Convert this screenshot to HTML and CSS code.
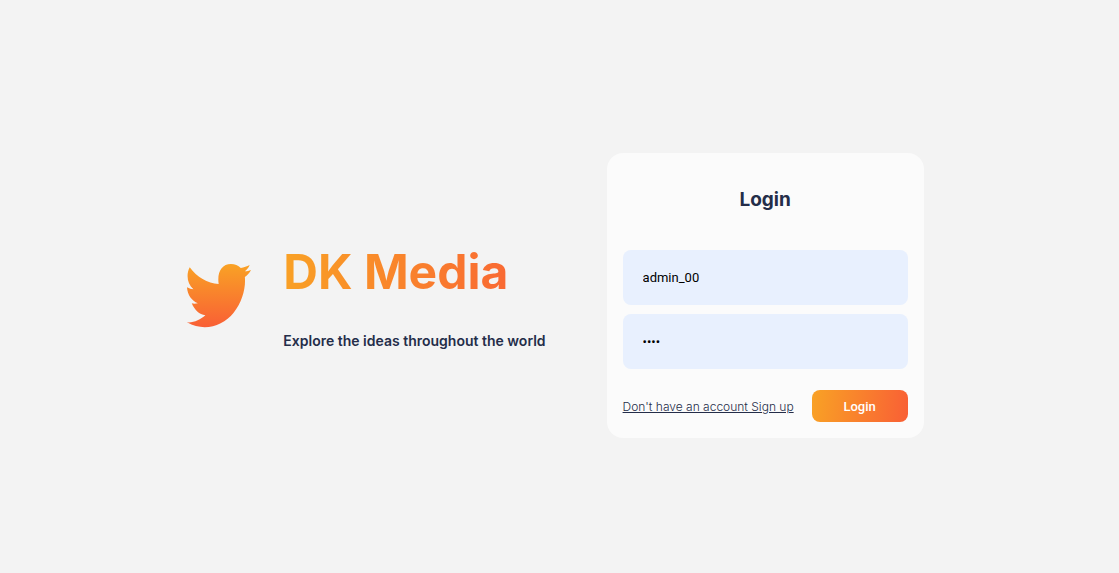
FILE: index.html
```html
<!DOCTYPE html>
<html lang="en">
<head>
<meta charset="utf-8">
<title>DK Media</title>
<meta name="viewport" content="width=device-width, initial-scale=1">
<link rel="stylesheet" href="styles.css">
</head>
<body>
<main class="auth">
  <section class="brand">
    <svg class="brand-logo" viewBox="24 27 188 192" preserveAspectRatio="none" aria-hidden="true">
      <defs>
        <linearGradient id="bird" x1="0" y1="0" x2="0" y2="1">
          <stop offset="0" stop-color="#f9a225"/>
          <stop offset="1" stop-color="#f95f35"/>
        </linearGradient>
      </defs>
      <path fill="url(#bird)" d="M32 37C53 66 84 86 117 87C112 51 126 27 153 27C165 27 174 31 182 39C191 38 200 34 208 30C205 38 200 44 194 49C201 49 206 47 212 45C208 53 202 60 194 66C197 99 186 141 161 173C129 213 75 232 24 202C44 204 63 194 78 181C60 179 46 165 38 145C44 147 50 146 56 145C38 138 25 119 24 97C31 101 37 103 43 103C24 86 21 58 32 37Z"/>
    </svg>
    <div class="brand-text">
      <h1 class="brand-name">DK Media</h1>
      <p class="brand-tagline">Explore the ideas throughout the world</p>
    </div>
  </section>
  <form class="login-card">
    <h2 class="login-title">Login</h2>
    <input class="field" type="text" name="username" aria-label="Username" value="admin_00">
    <input class="field" type="password" name="password" aria-label="Password" value="0000">
    <div class="login-actions">
      <a class="signup-link" href="#">Don't have an account Sign up</a>
      <button class="login-button" type="submit">Login</button>
    </div>
  </form>
</main>
</body>
</html>
```
FILE: styles.css
```css
* {
  box-sizing: border-box;
}

body {
  margin: 0;
  background: #f3f3f3;
  color: #242d49;
  font-family: Inter, sans-serif;
}

.auth {
  display: flex;
  min-height: 100vh;
  align-items: center;
  justify-content: center;
  gap: 61px;
  padding: 18px 8px 0 0;
}

.brand {
  display: flex;
  align-items: center;
  gap: 32px;
}

.brand-logo {
  width: 64px;
  height: 64px;
}

.brand-name {
  margin: 0 0 30px;
  font-size: 48px;
  line-height: 60px;
  font-weight: 700;
  background: linear-gradient(98deg, #f9a225 0%, #f95f35 100%);
  background-clip: text;
  -webkit-background-clip: text;
  color: transparent;
}

.brand-tagline {
  margin: 0;
  font-size: 14px;
  line-height: 18px;
  font-weight: 600;
}

.login-card {
  display: flex;
  flex-direction: column;
  gap: 9px;
  padding: 16px;
  border-radius: 16px;
  background: rgba(255, 255, 255, 0.64);
}

.login-title {
  margin: 19px 0 29px;
  font-size: 19px;
  line-height: 24px;
  font-weight: 700;
  text-align: center;
}

.field {
  width: 100%;
  height: 55px;
  padding: 0 20px;
  border: 0;
  border-radius: 8px;
  background: #e8f0fe;
  color: #000;
  font-family: Roboto, sans-serif;
  font-size: 13px;
}

.login-actions {
  display: flex;
  align-items: center;
  gap: 18px;
  margin-top: 12px;
}

.signup-link {
  color: inherit;
  font-size: 12px;
  font-weight: 300;
}

.login-button {
  width: 96px;
  height: 32px;
  border: 0;
  border-radius: 8px;
  background: linear-gradient(98deg, #f9a225 0%, #f95f35 100%);
  color: #fff;
  font-family: Roboto, sans-serif;
  font-size: 13px;
  font-weight: 500;
}
```
